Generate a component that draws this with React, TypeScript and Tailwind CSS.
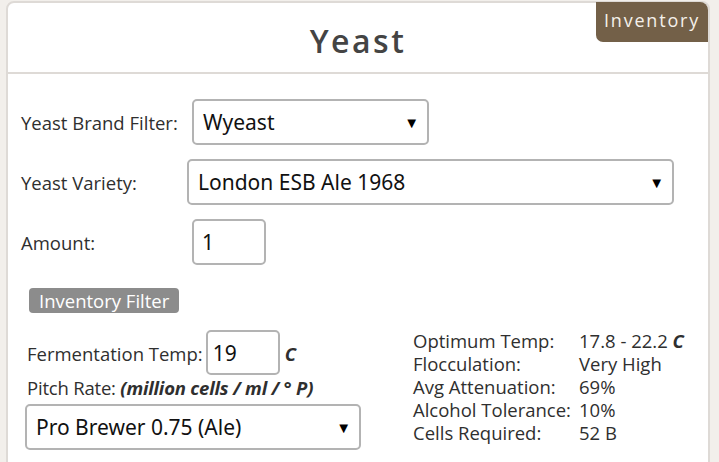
import { useState } from "react";

const stats = [
  { label: "Optimum Temp:", value: "17.8 - 22.2", unit: "C" },
  { label: "Flocculation:", value: "Very High" },
  { label: "Avg Attenuation:", value: "69%" },
  { label: "Alcohol Tolerance:", value: "10%" },
  { label: "Cells Required:", value: "52 B" },
];

function Select({ value, className }: { value: string; className: string }) {
  return (
    <div className={"relative flex items-center border-2 border-[#b3b3b3] rounded-[5px] bg-white " + className}>
      <span className="pl-[9px] text-[21px] text-[#111] font-['Noto_Sans',sans-serif] leading-none">{value}</span>
      <span className="absolute right-[8px] top-1/2 -translate-y-1/2 text-[15px] text-black leading-none">▼</span>
    </div>
  );
}

export default function App() {
  const [amount, setAmount] = useState("1");
  const [temp, setTemp] = useState("19");

  return (
    <div className="min-h-screen bg-[#f2efeb] pl-[6px] pr-[9px] pt-[1px] font-['Open_Sans',sans-serif] text-[#2f2f2f]">
      <div className="relative bg-white border-2 border-[#dedad6] rounded-t-lg h-[520px]">
        <div className="h-[71px] border-b-2 border-[#dedad6] flex items-center justify-center">
          <h1 className="text-[32px] font-semibold tracking-[2.5px] text-[#444] pt-[6px]">Yeast</h1>
        </div>
        <div className="absolute -top-[1px] right-0 h-[40px] w-[112px] bg-[#736048] rounded-tr-lg rounded-bl-[7px] flex items-center justify-center text-[18px] tracking-[1.8px] text-[#f5f0ea] pb-[3px]">
          Inventory
        </div>

        <div className="pl-[13px] pt-[25px] text-[18.5px]">
          <div className="flex items-center h-[46px]">
            <label className="w-[171px] pt-[2px]">Yeast Brand Filter:</label>
            <Select value="Wyeast" className="w-[237px] h-[46px]" />
          </div>
          <div className="flex items-center h-[46px] mt-[14px]">
            <label className="w-[166px] pt-[2px]">Yeast Variety:</label>
            <Select value="London ESB Ale 1968" className="w-[487px] h-[46px]" />
          </div>
          <div className="flex items-center h-[46px] mt-[14px]">
            <label className="w-[171px] pt-[2px]">Amount:</label>
            <input
              value={amount}
              onChange={(e) => setAmount(e.target.value)}
              className="w-[74px] h-[46px] border-2 border-[#b3b3b3] rounded-[5px] px-[8px] text-[21px] text-[#111] font-['Noto_Sans',sans-serif] outline-none"
            />
          </div>

          <div className="mt-[23px] ml-[8px] inline-flex items-center h-[25px] px-[10px] bg-[#8c8c8c] rounded-[4px] text-white text-[18.5px]">
            Inventory Filter
          </div>

          <div className="flex mt-[16px]">
            <div className="w-[347px] pl-[4px]">
              <div className="flex items-center h-[45px] pl-[2px]">
                <span className="pt-[2px]">Fermentation Temp:</span>
                <input
                  value={temp}
                  onChange={(e) => setTemp(e.target.value)}
                  className="ml-[3px] w-[74px] h-[45px] border-2 border-[#b3b3b3] rounded-[5px] px-[5px] text-[21px] text-[#111] font-['Noto_Sans',sans-serif] outline-none"
                />
                <span className="ml-[5px] font-bold italic pt-[2px]">C</span>
              </div>
              <div className="pl-[2px] mt-[1px] leading-[24px] tracking-[-0.2px]">
                Pitch Rate: <span className="font-bold italic">(million cells / ml / ° P)</span>
              </div>
              <Select value="Pro Brewer 0.75 (Ale)" className="w-[336px] h-[46px] mt-[4px]" />
            </div>
            <div className="ml-[45px] mt-[-1px] leading-[23px]">
              {stats.map((s) => (
                <div key={s.label} className="flex">
                  <span className="w-[166px]">{s.label}</span>
                  <span>
                    {s.value}
                    {s.unit && <span className="font-bold italic"> {s.unit}</span>}
                  </span>
                </div>
              ))}
            </div>
          </div>
        </div>
      </div>
    </div>
  );
}
